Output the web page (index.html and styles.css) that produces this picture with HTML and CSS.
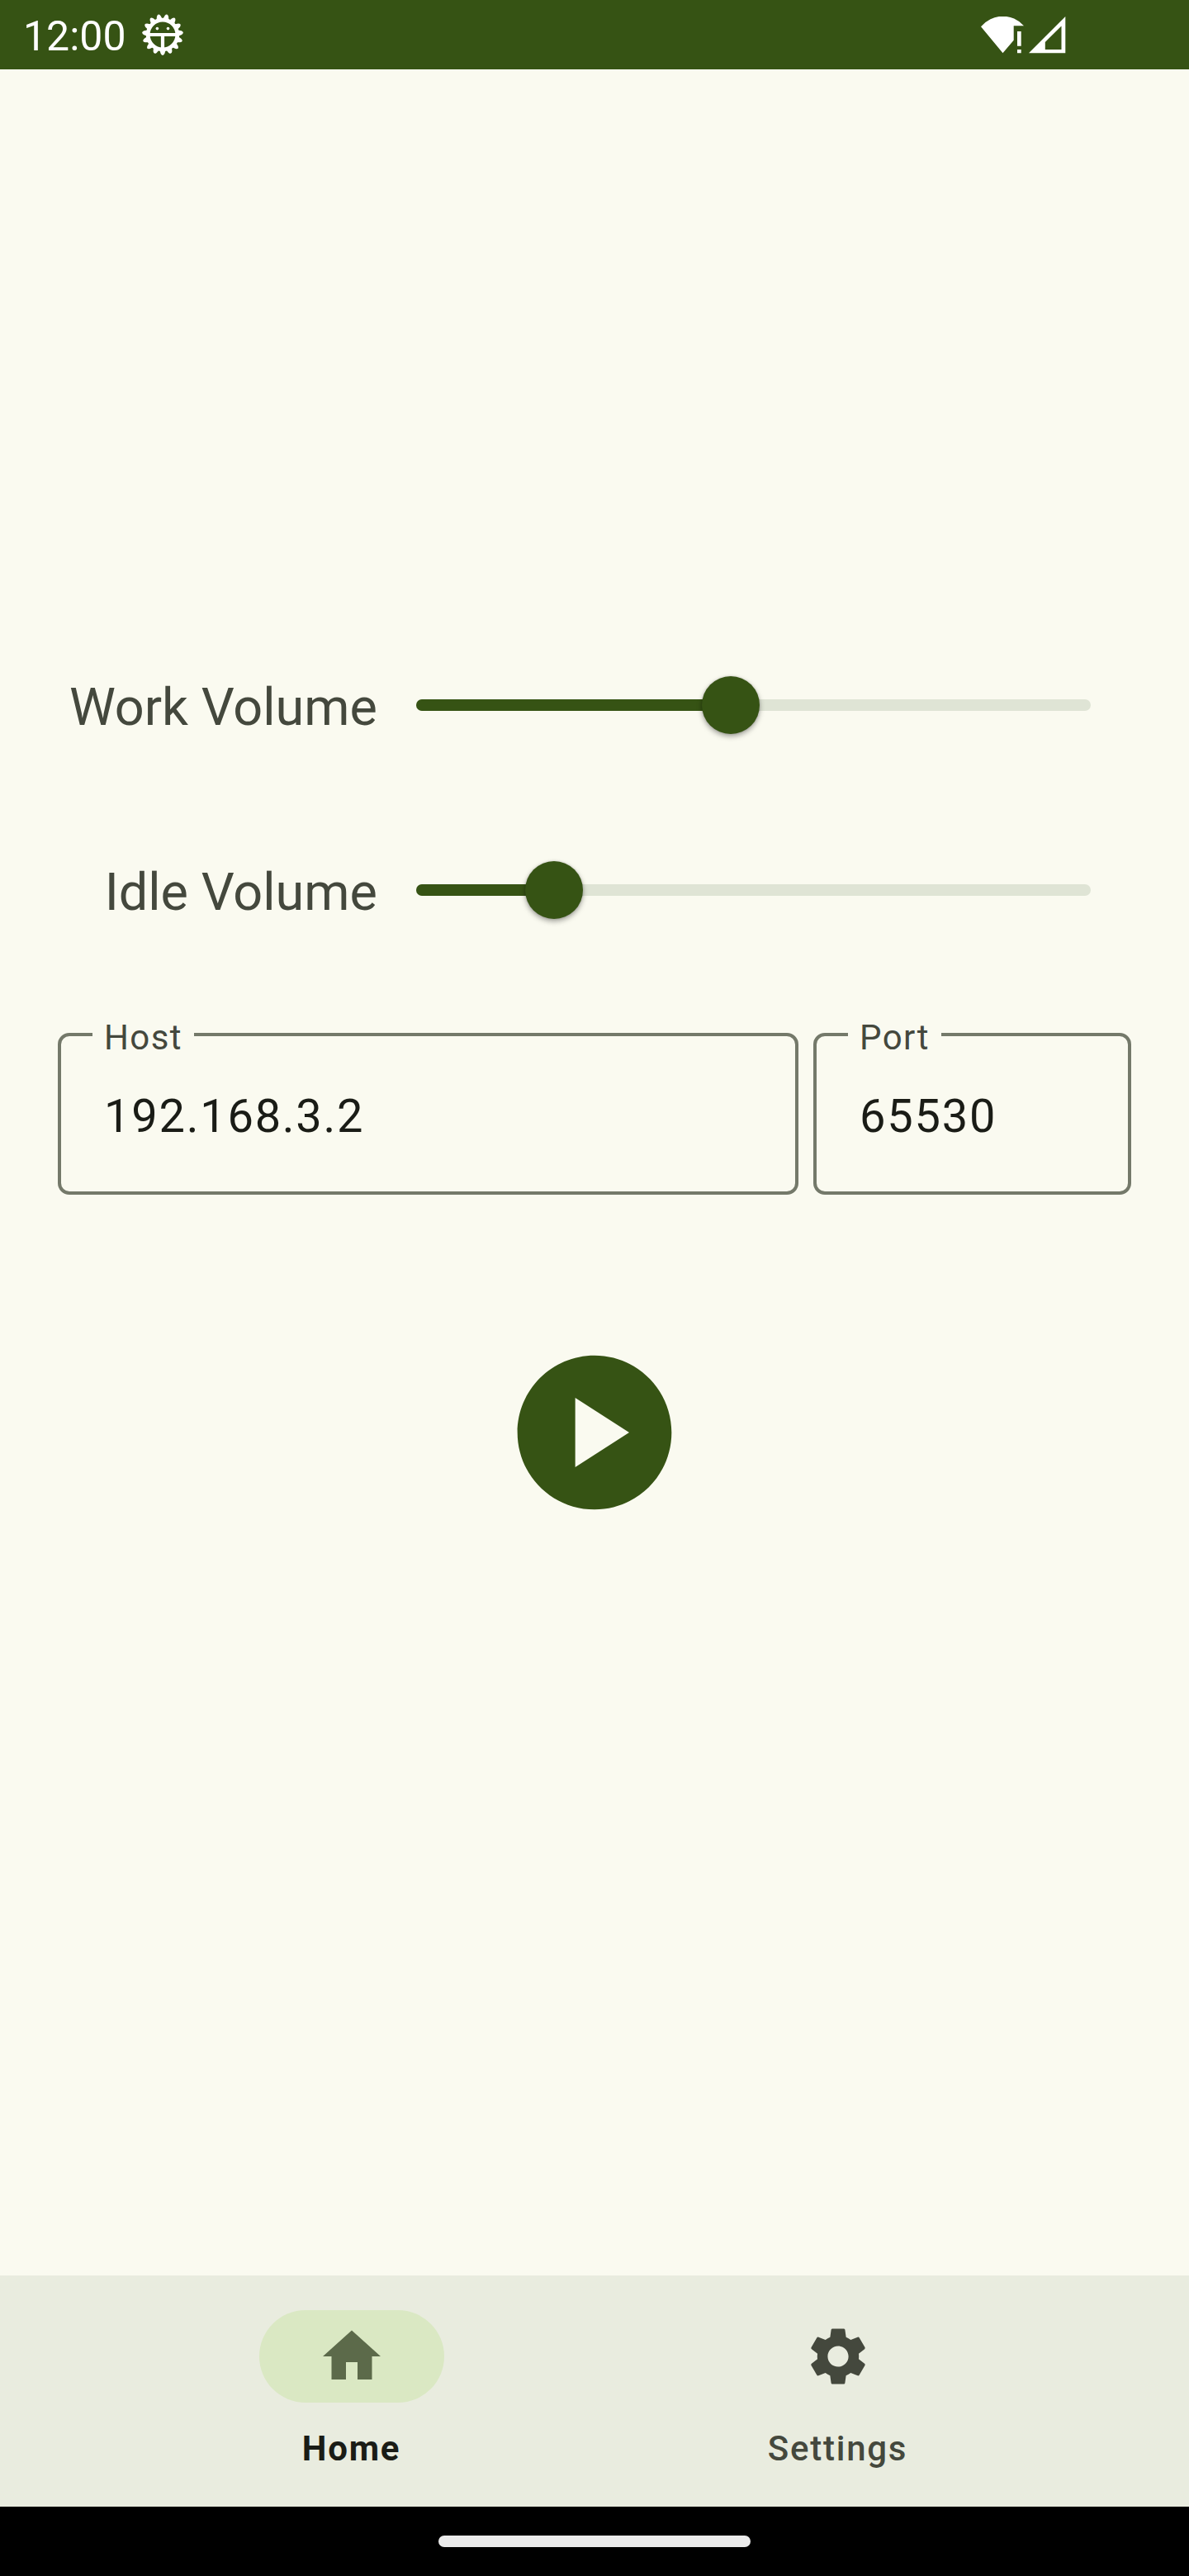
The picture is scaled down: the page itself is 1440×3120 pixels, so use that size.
FILE: index.html
```html
<!DOCTYPE html>
<html lang="en">
<head>
<meta charset="utf-8">
<title>Home</title>
<link rel="stylesheet" href="styles.css">
</head>
<body>
<div class="screen">
  <header class="status">
    <span class="clock">12:00</span>
    <svg class="debug" width="52" height="52" viewBox="-26 -26 52 52" fill="#fff">
      <defs><path id="tooth" d="M-4 17.5L-2.3 23Q0 26.8 2.3 23L4 17.5Z"/></defs>
      <use href="#tooth"/>
      <use href="#tooth" transform="rotate(24)"/>
      <use href="#tooth" transform="rotate(48)"/>
      <use href="#tooth" transform="rotate(72)"/>
      <use href="#tooth" transform="rotate(96)"/>
      <use href="#tooth" transform="rotate(120)"/>
      <use href="#tooth" transform="rotate(144)"/>
      <use href="#tooth" transform="rotate(168)"/>
      <use href="#tooth" transform="rotate(192)"/>
      <use href="#tooth" transform="rotate(216)"/>
      <use href="#tooth" transform="rotate(240)"/>
      <use href="#tooth" transform="rotate(264)"/>
      <use href="#tooth" transform="rotate(288)"/>
      <use href="#tooth" transform="rotate(312)"/>
      <use href="#tooth" transform="rotate(336)"/>
      <circle r="17.8" fill="none" stroke="#fff" stroke-width="4.8"/>
      <path d="M-17 0H17M0 0V17" stroke="#fff" stroke-width="4.2"/>
      <circle cx="-6.6" cy="-7.4" r="1.8"/>
      <circle cx="6.5" cy="-7.4" r="1.8"/>
    </svg>
    <div class="signals">
      <svg width="53" height="45" viewBox="0 0 53 45" fill="#fff">
        <path d="M0 12.3A34 34 0 0 1 52 11.3H39.7V28.7L26.5 44.3Z"/>
        <path d="M44 18h4.7v17.7H44zM44 40h4.7v4.3H44z"/>
      </svg>
      <svg width="45" height="45" viewBox="0 0 45 45" fill="#fff">
        <path fill-rule="evenodd" d="M0 44.3L44.3 0V44.3ZM19.8 31V40H39.5V11.5Z"/>
      </svg>
    </div>
  </header>

  <main class="content">
    <div class="row">
      <span class="label">Work Volume</span>
      <div class="slider"><div class="fill" style="width:381px"><i class="thumb"></i></div></div>
    </div>
    <div class="row">
      <span class="label">Idle Volume</span>
      <div class="slider"><div class="fill" style="width:167px"><i class="thumb"></i></div></div>
    </div>
    <div class="fields">
      <fieldset class="field host"><legend>Host</legend><span>192.168.3.2</span></fieldset>
      <fieldset class="field port"><legend>Port</legend><span>65530</span></fieldset>
    </div>
    <svg class="play" width="224" height="224" viewBox="0 0 24 24">
      <path d="M12,2C6.48,2 2,6.48 2,12s4.48,10 10,10 10,-4.48 10,-10S17.52,2 12,2zM9.5,16.5v-9l7,4.5L9.5,16.5z"/>
    </svg>
  </main>

  <nav class="nav">
    <div class="item active">
      <div class="pill"><svg width="84" height="84" viewBox="0 0 24 24"><path d="M10 20v-6h4v6h5v-8h3L12 3 2 12h3v8z"/></svg></div>
      <span>Home</span>
    </div>
    <div class="item">
      <div class="pill"><svg width="84" height="84" viewBox="0 0 24 24"><path d="M19.14 12.94c.04-.3.06-.61.06-.94 0-.32-.02-.64-.07-.94l2.03-1.58c.18-.14.23-.41.12-.61l-1.92-3.32c-.12-.22-.37-.29-.59-.22l-2.39.96c-.5-.38-1.03-.7-1.62-.94l-.36-2.54c-.04-.24-.24-.41-.48-.41h-3.84c-.24 0-.43.17-.47.41l-.36 2.54c-.59.24-1.13.57-1.62.94l-2.39-.96c-.22-.08-.47 0-.59.22L2.74 8.87c-.12.21-.08.47.12.61l2.03 1.58c-.05.3-.09.63-.09.94s.02.64.07.94l-2.03 1.58c-.18.14-.23.41-.12.61l1.92 3.32c.12.22.37.29.59.22l2.39-.96c.5.38 1.03.7 1.62.94l.36 2.54c.05.24.24.41.48.41h3.84c.24 0 .44-.17.47-.41l.36-2.54c.59-.24 1.13-.56 1.62-.94l2.39.96c.22.08.47 0 .59-.22l1.92-3.32c.12-.22.07-.47-.12-.61l-2.01-1.58zM12 15.6c-1.98 0-3.6-1.62-3.6-3.6s1.62-3.6 3.6-3.6 3.6 1.62 3.6 3.6-1.62 3.6-3.6 3.6z"/></svg></div>
      <span>Settings</span>
    </div>
  </nav>
  <footer class="gesture"><div class="handle"></div></footer>
</div>
</body>
</html>
```
FILE: styles.css
```css
* { box-sizing: border-box; }
body { margin: 0; font-family: Roboto, "Liberation Sans", sans-serif; background: #fafaf0; color: #44483d; }
svg { display: block; flex: none; }
.screen { width: 1440px; height: 3120px; display: flex; flex-direction: column; }

.status { height: 84px; background: #365314; display: flex; align-items: center; padding: 0 149.5px 0 28px; }
.clock { width: 143.3px; font-size: 50px; line-height: 58px; color: #fff; padding-top: 3px; }
.signals { display: flex; gap: 4.5px; margin-left: auto; }

.content { flex: 1; padding: 658px 70px 0; display: flex; flex-direction: column; }
.row { height: 224px; display: flex; align-items: center; }
.label { width: 387px; font-size: 63px; line-height: 84px; text-align: right; white-space: nowrap; padding-top: 5px; }
.slider { width: 817px; height: 14px; margin-left: 47px; border-radius: 7px; background: #dfe4d5; }
.fill { height: 14px; border-radius: 7px; background: #365314; display: flex; align-items: center; justify-content: flex-end; }
.thumb { width: 70px; height: 70px; flex: none; margin-right: -35px; border-radius: 50%; background: #365314; box-shadow: 0 3px 6px rgba(0,0,0,.35), 0 0 3px rgba(0,0,0,.15); }

.fields { display: flex; gap: 18px; margin-top: 31px; }
.field { margin: 0; border: 4px solid #74796a; border-radius: 14px; padding: 0 0 0 38px; height: 226px; min-width: 0; color: #1a1c16; }
.host { width: 897px; }
.port { width: 385px; }
.field legend { font-size: 42px; line-height: 56px; letter-spacing: 1.4px; color: #44483d; padding: 8px 14px 0; }
.field span { display: block; font-size: 56px; line-height: 84px; letter-spacing: 1.75px; padding-left: 14px; margin-top: 25px; }
.play { align-self: center; margin-top: 176px; fill: #365314; }

.nav { height: 280px; background: #e9ecdf; display: flex; justify-content: center; padding-top: 42px; }
.item { width: 589px; display: flex; flex-direction: column; align-items: center; fill: #44483d; }
.item span { font-size: 42px; line-height: 56px; letter-spacing: 1.75px; font-weight: 500; margin-top: 28px; }
.pill { width: 224px; height: 112px; border-radius: 56px; display: flex; align-items: center; justify-content: center; }
.active { fill: #5c6a4a; color: #1a1c16; }
.active .pill { background: #dae8c3; }
.active span { font-weight: 700; }

.gesture { height: 84px; background: #000; display: flex; align-items: center; justify-content: center; }
.handle { width: 378px; height: 14px; border-radius: 7px; background: #ebebeb; }
```
